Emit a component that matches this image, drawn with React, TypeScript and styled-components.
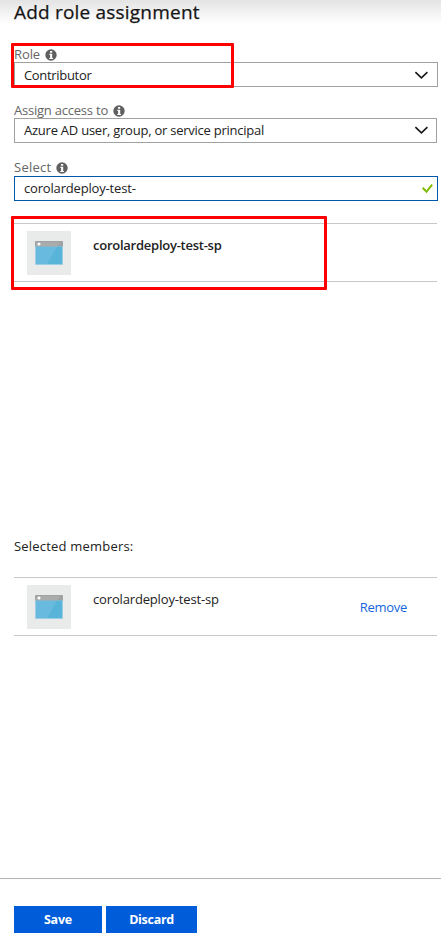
import React from "react";
import styled, { createGlobalStyle } from "styled-components";

const GlobalStyle = createGlobalStyle`
  * { box-sizing: border-box; }
  body { margin: 0; background: #fff; font-family: "Open Sans", "Noto Sans", sans-serif; font-size: 13px; color: #222; }
`;

const Blade = styled.main`
  position: relative;
  display: flex;
  flex-direction: column;
  height: 941px;
  width: 441px;
  overflow: hidden;
  background: linear-gradient(#e4e4e4, #fff 24px);
`;

const Title = styled.h1`
  margin: 0;
  padding-left: 14px;
  height: 46px;
  font-size: 19px;
  line-height: 24px;
  font-weight: 500;
  color: #151515;
  -webkit-text-stroke: 0.25px #151515;
`;

const Text = styled.span<{ $spacing?: number }>`
  white-space: nowrap;
  letter-spacing: ${(p) => p.$spacing ?? 0}px;
`;

const Field = styled.section<{ $gap: number }>`
  margin: 0 3px ${(p) => p.$gap}px 14px;
`;

const Label = styled.label<{ $height?: number }>`
  display: flex;
  align-items: center;
  gap: 5px;
  height: ${(p) => p.$height ?? 16}px;
  padding-bottom: ${(p) => (p.$height ?? 16) - 16}px;
  line-height: 16px;
  color: #666;
  svg { margin-top: 2px; }
`;

const Control = styled.div<{ $active?: boolean; $raised?: boolean; $width: number }>`
  display: flex;
  align-items: center;
  justify-content: space-between;
  width: ${(p) => p.$width}px;
  height: 25px;
  padding: 0 0 ${(p) => (p.$active || p.$raised ? 1 : 0)}px 9px;
  border: 1px solid ${(p) => (p.$active ? "#0058ad" : "#a0a0a0")};
  background: #fff;
`;

const Member = styled.div`
  display: flex;
  width: 423px;
  height: 59px;
  margin-left: 14px;
  padding: 7px 30px 0 13px;
  border: solid #c8c8c8;
  border-width: 1px 0;
`;

const Tile = styled.div`
  display: grid;
  place-items: center;
  width: 44px;
  height: 44px;
  margin-right: 22px;
  background: #e9ebea;
`;

const Name = styled.div<{ $strong?: boolean }>`
  flex: 1;
  padding-top: 5px;
  line-height: 18px;
  font-weight: ${(p) => (p.$strong ? 600 : 400)};
`;

const Remove = styled.a`
  padding-top: 13px;
  line-height: 18px;
  color: #1565dc;
`;

const Heading = styled.h2`
  margin: 255px 0 21px 14px;
  font-size: 13px;
  line-height: 19px;
  font-weight: 400;
`;

const Footer = styled.footer`
  display: flex;
  gap: 4px;
  height: 63px;
  margin-top: auto;
  padding: 27px 0 0 14px;
  border-top: 1px solid #b4b4b4;
`;

const Button = styled.button<{ $width: number }>`
  width: ${(p) => p.$width}px;
  height: 27px;
  padding: 0;
  border: 0;
  background: #015cda;
  color: #fff;
  font: 700 12.5px "Open Sans", "Noto Sans", sans-serif;
`;

const Highlight = styled.div<{ $top: number; $width: number; $height: number }>`
  position: absolute;
  left: 11px;
  top: ${(p) => p.$top}px;
  width: ${(p) => p.$width}px;
  height: ${(p) => p.$height}px;
  border: 3px solid #f00;
  border-radius: 1px;
`;

const InfoIcon = () => (
  <svg width="12" height="12" viewBox="0 0 11 11">
    <circle cx="5.5" cy="5.5" r="5.2" fill="#606060" />
    <path d="M4.6 1.8h2v1.6h-2zM4 4.4h2.6v3.8h.8v1H3.9v-1h.8V5.4H4z" fill="#fff" />
  </svg>
);

const Chevron = ({ width = 24 }: { width?: number }) => (
  <svg width={width} height="12" viewBox={`0 0 ${width} 12`}>
    <path d="M2.4 3.2 8.4 8.8l6-5.6" fill="none" stroke="#161616" strokeWidth="1.6" />
  </svg>
);

const Check = () => (
  <svg width="16" height="11" viewBox="0 0 16 11">
    <path d="M1.7 4.8 5.5 8.8l5.6-7.2" fill="none" stroke="#7fba00" strokeWidth="2" />
  </svg>
);

const AppIcon = () => (
  <svg width="28" height="24" viewBox="0 0 28 24">
    <rect width="28" height="24" rx="1" fill="#9bcde4" />
    <path d="M0 1a1 1 0 0 1 1-1h26a1 1 0 0 1 1 1v4.5H0z" fill="#a0a1a2" />
    <path d="M1 5.5h26V23H1z" fill="#59b4d9" />
    <path d="M1 5.5h21L12 23H1z" fill="#69badf" />
    <path d="M1 1h24l-2.8 4.5H1z" fill="#aaabab" />
    <circle cx="4" cy="3" r="1.5" fill="#fff" />
  </svg>
);

export default function App() {
  return (
    <Blade>
      <GlobalStyle />
      <Title><Text $spacing={0.2}>Add role assignment</Text></Title>
      <Field $gap={15}>
        <Label><Text $spacing={-0.1}>Role</Text><InfoIcon /></Label>
        <Control $width={424}><Text $spacing={-0.32}>Contributor</Text><Chevron /></Control>
      </Field>
      <Field $gap={16}>
        <Label><Text $spacing={-0.22}>Assign access to</Text><InfoIcon /></Label>
        <Control $raised $width={423}><Text $spacing={-0.24}>Azure AD user, group, or service principal</Text><Chevron width={23} /></Control>
      </Field>
      <Field $gap={22}>
        <Label $height={17}><Text $spacing={0.25}>Select</Text><InfoIcon /></Label>
        <Control $active $width={424}><Text $spacing={-0.17}>corolardeploy-test-</Text><Check /></Control>
      </Field>
      <Member>
        <Tile><AppIcon /></Tile>
        <Name $strong><Text $spacing={-0.25}>corolardeploy-test-sp</Text></Name>
      </Member>
      <Heading><Text $spacing={0.2}>Selected members:</Text></Heading>
      <Member>
        <Tile><AppIcon /></Tile>
        <Name><Text $spacing={-0.16}>corolardeploy-test-sp</Text></Name>
        <Remove><Text $spacing={-0.3}>Remove</Text></Remove>
      </Member>
      <Footer>
        <Button $width={88}><Text $spacing={-0.2}>Save</Text></Button>
        <Button $width={91}><Text $spacing={-0.3}>Discard</Text></Button>
      </Footer>
      <Highlight $top={43} $width={223} $height={45} />
      <Highlight $top={216} $width={316} $height={74} />
    </Blade>
  );
}
